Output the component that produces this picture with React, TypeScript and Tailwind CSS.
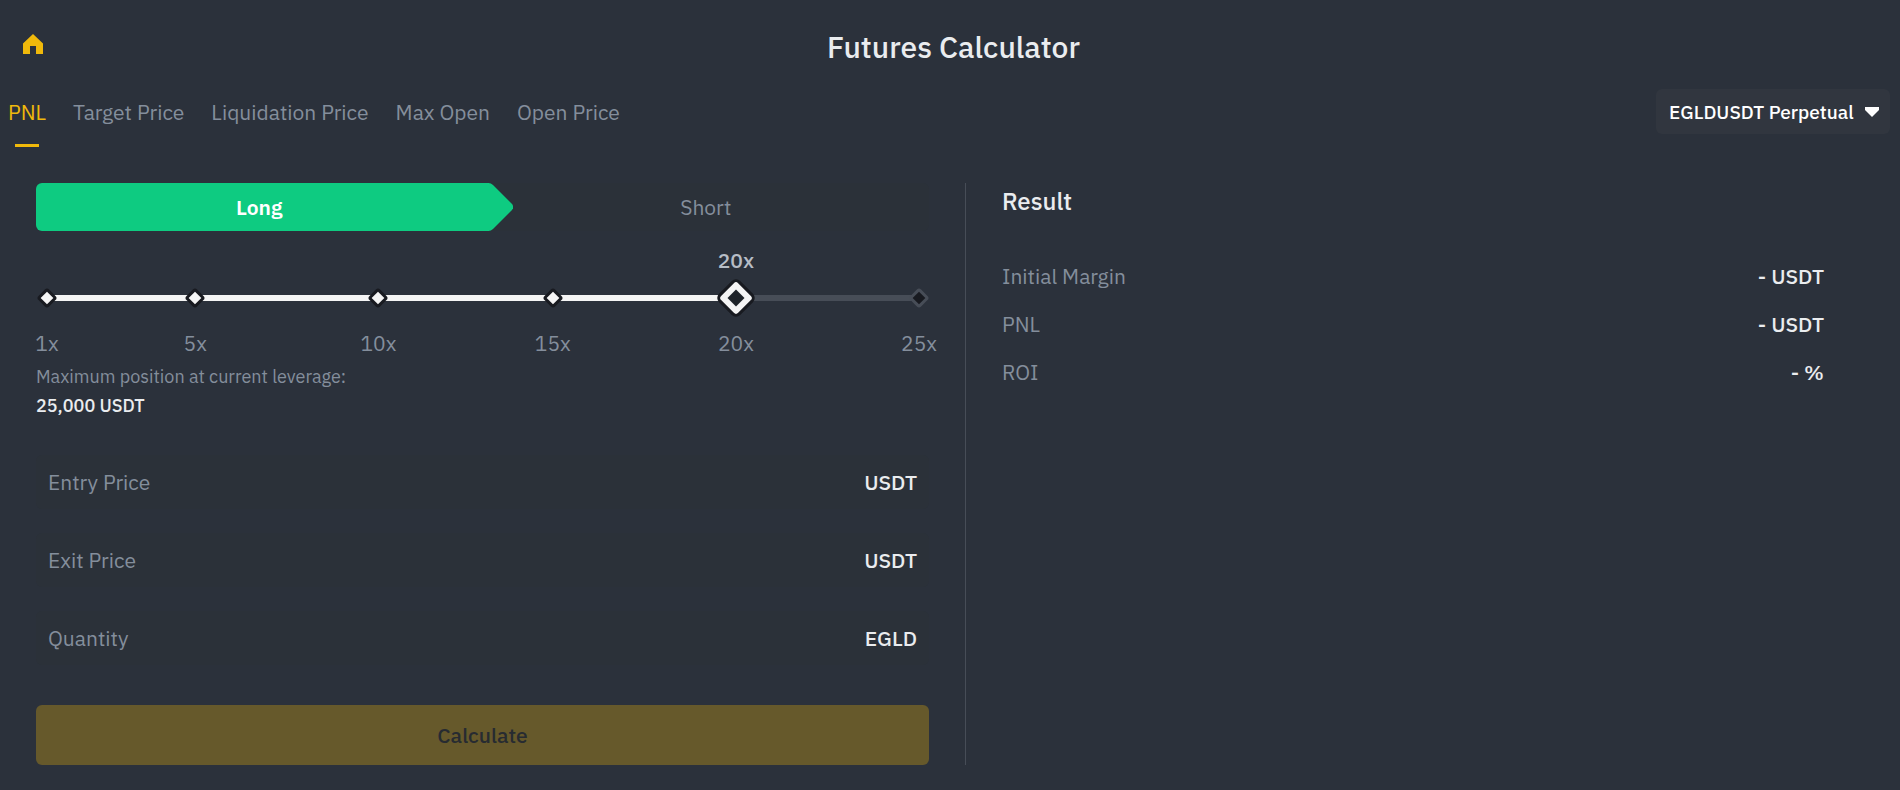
import React, { useState } from 'react';

type Side = 'long' | 'short';

const TABS = [
  'PNL',
  'Target Price',
  'Liquidation Price',
  'Max Open',
  'Open Price',
];

const MARKS = [
  { value: 1, position: 0 },
  { value: 5, position: 17 },
  { value: 10, position: 38 },
  { value: 15, position: 58 },
  { value: 20, position: 79 },
  { value: 25, position: 100 },
];

const FIELDS = [
  { id: 'entry-price', label: 'Entry Price', unit: 'USDT' },
  { id: 'exit-price', label: 'Exit Price', unit: 'USDT' },
  { id: 'quantity', label: 'Quantity', unit: 'EGLD' },
];

const RESULTS = [
  { label: 'Initial Margin', value: '- USDT' },
  { label: 'PNL', value: '- USDT' },
  { label: 'ROI', value: '- %' },
];

const HomeIcon: React.FC = () => (
  <svg className="h-5 w-5" viewBox="0 0 20 20" fill="#f0b90b">
    <path d="M0 9.500L10 0l10 9.500V20h-7v-8H7v8H0z" />
  </svg>
);

const SideToggle: React.FC<{ side: Side; onChange: (side: Side) => void }> = ({
  side,
  onChange,
}) => (
  <div className="flex h-12 rounded-md bg-[#2b3139]">
    <button
      onClick={() => onChange('long')}
      className={`relative h-full flex-1 rounded-l-md ${
        side === 'long'
          ? 'bg-[#0ecb81] font-semibold text-white'
          : 'text-[#848e9c]'
      }`}
    >
      Long
      {side === 'long' && (
        <svg
          className="absolute top-0 left-full h-12 w-[30px]"
          viewBox="0 0 30 48"
          fill="#0ecb81"
        >
          <path d="M-1 0H5.500Q8 0 10 2L28.500 20.500Q32 24 28.500 27.500L10 46Q8 48 5.500 48H-1z" />
        </svg>
      )}
    </button>
    <button
      onClick={() => onChange('short')}
      className={`h-full flex-1 rounded-r-md ${
        side === 'short'
          ? 'bg-[#f6465d] font-semibold text-white'
          : 'text-[#848e9c]'
      }`}
    >
      Short
    </button>
  </div>
);

const LeverageSlider: React.FC<{
  value: number;
  onChange: (value: number) => void;
}> = ({ value, onChange }) => {
  // Marks are not spaced linearly, so interpolate between the two nearest ones
  const next = Math.max(
    1,
    MARKS.findIndex((mark) => mark.value >= value),
  );
  const from = MARKS[next - 1];
  const to = MARKS[next];
  const percent =
    from.position +
    ((value - from.value) / (to.value - from.value)) *
      (to.position - from.position);

  return (
    <div className="mr-[10px] ml-[11px] pt-16">
      <div className="relative h-[6px] bg-[#474d57]">
        <div
          className="h-full bg-[#f5f5f5]"
          style={{ width: `${percent}%` }}
        />
        {MARKS.map((mark) => (
          <span
            key={mark.value}
            className={`absolute top-1/2 h-[15px] w-[15px] -translate-x-1/2 -translate-y-1/2 rotate-45 rounded-[3px] border-[3px] ${
              mark.value <= value
                ? 'border-[#181a20] bg-[#f5f5f5]'
                : 'border-[#474d57] bg-[#181a20]'
            }`}
            style={{ left: `${mark.position}%` }}
          />
        ))}
        <span
          className="absolute bottom-[26px] -translate-x-1/2 font-medium text-[#b7bdc6]"
          style={{ left: `${percent}%` }}
        >
          {value}x
        </span>
        <span
          className="absolute top-1/2 flex h-[30px] w-[30px] -translate-x-1/2 -translate-y-1/2 rotate-45 items-center justify-center rounded-md border-[3px] border-[#181a20] bg-[#f5f5f5]"
          style={{ left: `${percent}%` }}
        >
          <span className="h-3 w-3 bg-[#1e2329]" />
        </span>
        <input
          type="range"
          aria-label="Leverage"
          min={1}
          max={25}
          value={value}
          onChange={(e) => onChange(Number(e.target.value))}
          className="absolute inset-x-0 -top-3 h-8 w-full cursor-pointer opacity-0"
        />
      </div>
      <div className="relative mt-[27px] h-[30px] text-[#848e9c]">
        {MARKS.map((mark) => (
          <span
            key={mark.value}
            className="absolute top-0 -translate-x-1/2"
            style={{ left: `${mark.position}%` }}
          >
            {mark.value}x
          </span>
        ))}
      </div>
    </div>
  );
};

export default function App() {
  const [tab, setTab] = useState('PNL');
  const [side, setSide] = useState<Side>('long');
  const [leverage, setLeverage] = useState(20);

  return (
    <div className="min-h-screen bg-[#2b313b] font-['IBM_Plex_Sans',Roboto,sans-serif] text-[21px] leading-[30px] text-[#eaecef]">
      <header className="flex items-start pt-6 pr-9 pl-[23px]">
        <a href="#home" aria-label="Home" className="pt-[10px]">
          <HomeIcon />
        </a>
        <h1 className="flex-1 text-center text-[30px] leading-[45px] font-medium">
          Futures Calculator
        </h1>
      </header>

      <div className="mt-5 flex items-start justify-between pr-[10px] pl-2">
        <nav className="flex gap-[27px]">
          {TABS.map((name) => (
            <button
              key={name}
              onClick={() => setTab(name)}
              className={`flex flex-col items-center pt-2 ${
                tab === name ? 'text-[#f0b90b]' : 'text-[#848e9c]'
              }`}
            >
              {name}
              {tab === name && (
                <span className="mt-[17px] h-[3px] w-6 bg-[#f0b90b]" />
              )}
            </button>
          ))}
        </nav>
        <div className="relative">
          <select
            aria-label="Contract"
            className="h-[45px] w-[234px] appearance-none rounded-md bg-[#31363f] pl-[13px] text-[19px] font-medium text-white"
          >
            <option>EGLDUSDT Perpetual</option>
          </select>
          <svg
            className="pointer-events-none absolute top-[18px] right-[11px] h-[10px] w-[14px]"
            viewBox="0 0 14 10"
            fill="#fff"
          >
            <path d="M0 0h14v3L7 10 0 3z" />
          </svg>
        </div>
      </div>

      <main className="mt-9 flex pb-6">
        <section className="w-[calc(50%+15px)] px-9">
          <SideToggle side={side} onChange={setSide} />
          <LeverageSlider value={leverage} onChange={setLeverage} />
          <p className="mt-1 text-lg leading-[29px] text-[#848e9c]">
            Maximum position at current leverage:
          </p>
          <p className="text-lg leading-[29px] font-medium">25,000 USDT</p>

          <div className="mt-[35px] flex flex-col gap-6">
            {FIELDS.map((field) => (
              <div
                key={field.id}
                className="flex h-[54px] items-center rounded-md bg-[#2b3139] px-3"
              >
                <label htmlFor={field.id} className="text-[#848e9c]">
                  {field.label}
                </label>
                <input
                  id={field.id}
                  type="text"
                  className="min-w-0 flex-1 bg-transparent px-3 text-right outline-none"
                />
                <span className="font-medium">{field.unit}</span>
              </div>
            ))}
          </div>

          <button
            disabled
            className="mt-10 h-[60px] w-full rounded-md bg-[#66592b] font-medium text-[#272b31]"
          >
            Calculate
          </button>
        </section>

        <section className="flex-1 border-l border-[#474d57] pr-[76px] pl-9">
          <h2 className="mt-[3px] text-2xl leading-[30px] font-medium">
            Result
          </h2>
          <dl className="mt-9">
            {RESULTS.map((row) => (
              <div
                key={row.label}
                className="flex h-12 items-center justify-between"
              >
                <dt className="text-[#848e9c]">{row.label}</dt>
                <dd className="font-medium">{row.value}</dd>
              </div>
            ))}
          </dl>
        </section>
      </main>
    </div>
  );
}
